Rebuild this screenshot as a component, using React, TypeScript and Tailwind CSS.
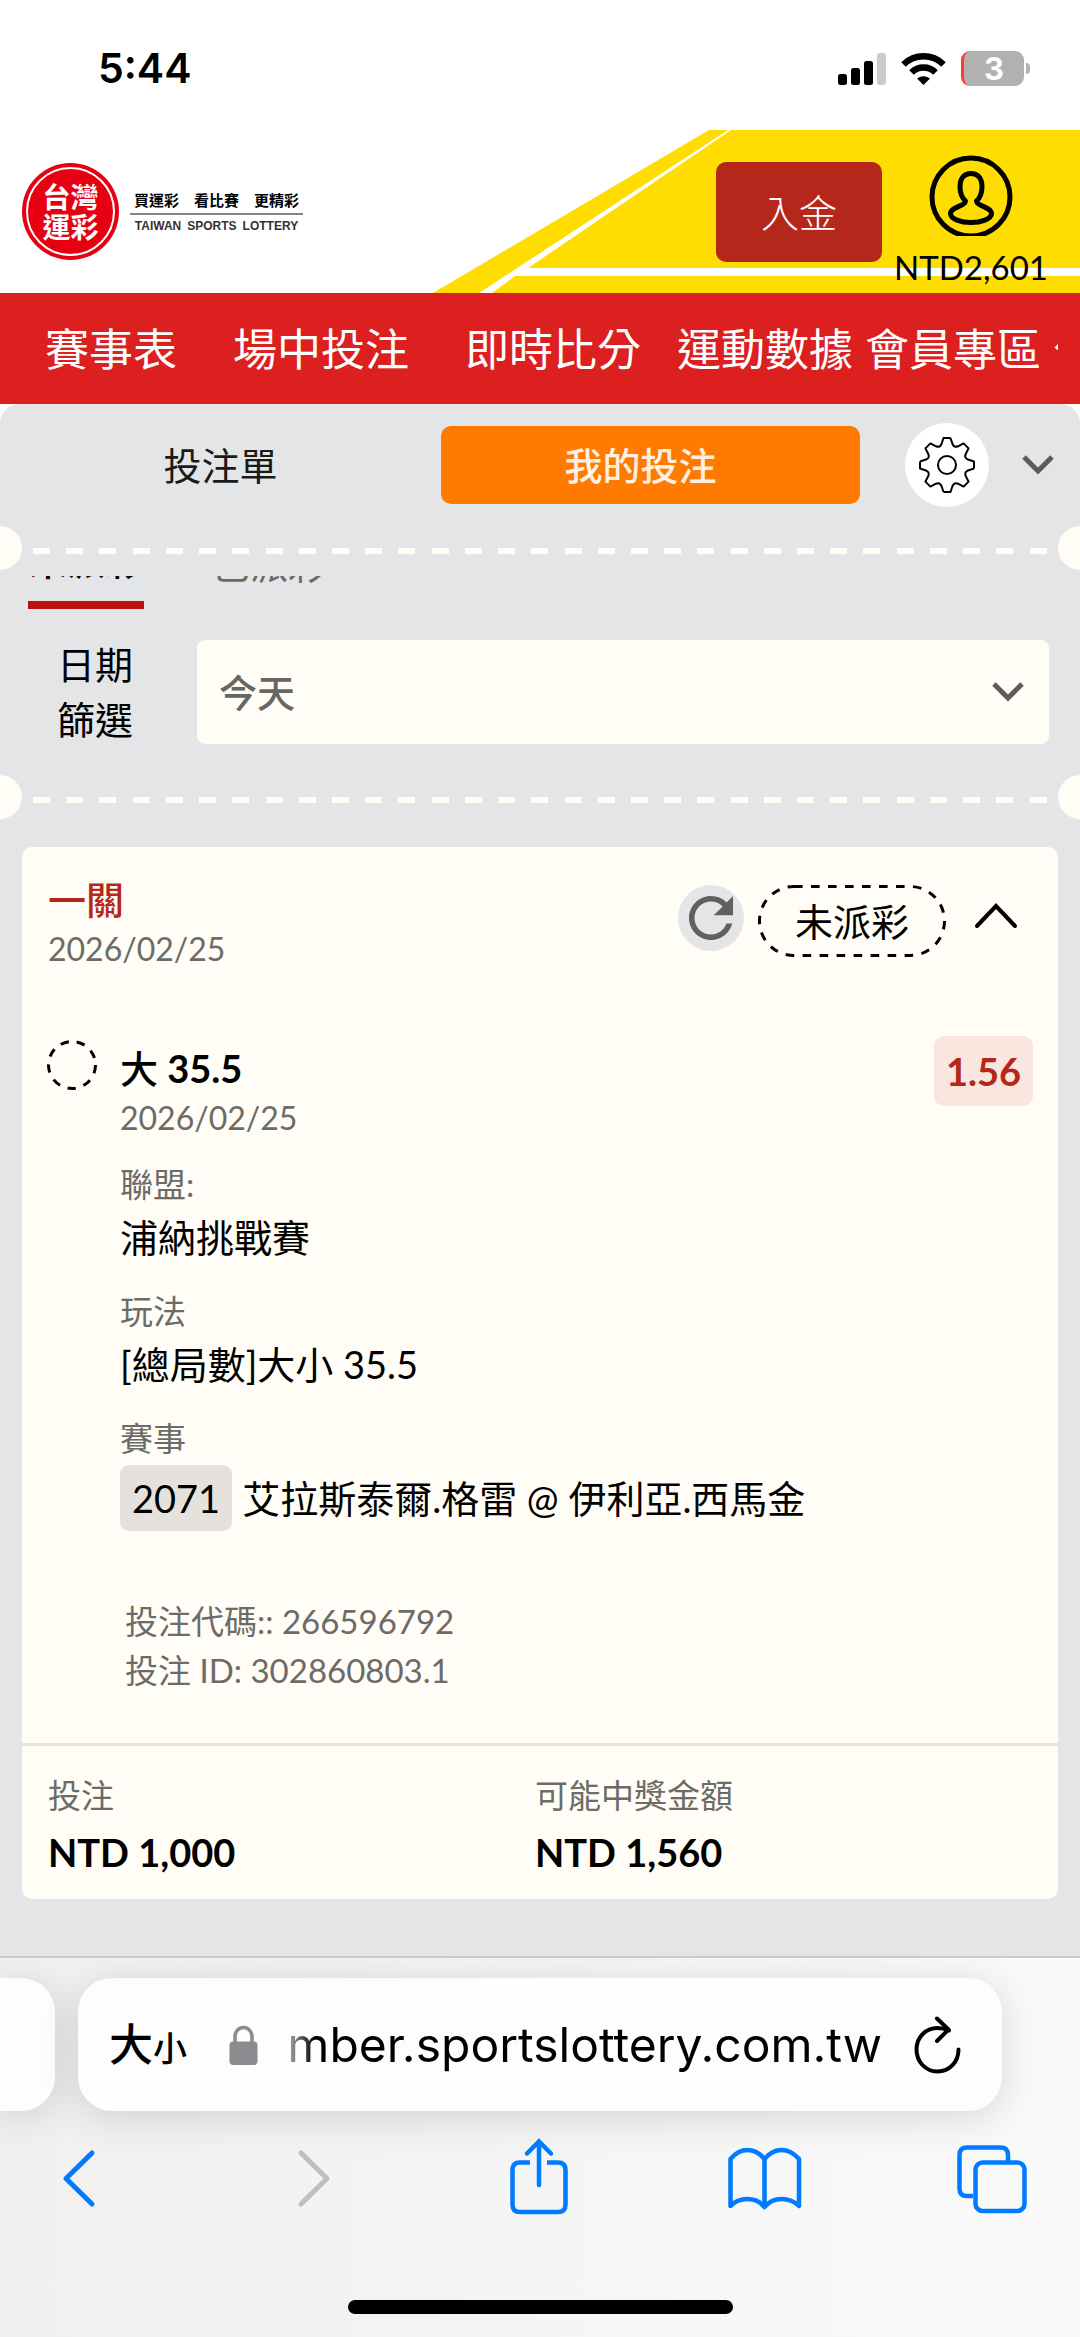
import React, { useState } from 'react';
import { MdRefresh } from 'react-icons/md';

const navItems = [
  { label: '賽事表', className: 'pr-11' },
  { label: '場中投注', className: 'pr-11' },
  { label: '即時比分', className: 'pr-6' },
  { label: '運動數據', className: '' },
  { label: '會員專區', className: '' },
  { label: '公益', className: '' }
];

const StatusBar: React.FC = () => (
  <div className="flex h-[130px] items-start justify-between bg-white pt-[47px] pl-[98px] pr-[50px] font-['Inter',sans-serif]">
    <span className="text-[41px] leading-[43px] font-semibold text-black">5:44</span>
    <div className="flex items-center gap-[15px] pt-1">
      <svg width="48" height="34" viewBox="0 0 48 34">
        <rect x="0" y="22" width="9" height="11" rx="2.5" />
        <rect x="13" y="16" width="9" height="17" rx="2.5" />
        <rect x="26" y="9" width="9" height="24" rx="2.5" />
        <rect x="39" y="1" width="9" height="32" rx="2.5" fill="#cccccc" />
      </svg>
      <svg width="45" height="34" viewBox="0 0 45 34">
        <g fill="none" stroke="#000" strokeWidth="6.5">
          <path d="M2.5 12.5a28.5 28.5 0 0 1 40 0" />
          <path d="M10.5 20.5a17 17 0 0 1 24 0" />
        </g>
        <path d="M16 26.500q6.500-4.500 13 0L22.500 33z" />
      </svg>
      <div className="flex items-center gap-[2px]">
        <div className="flex h-[35px] w-[63px] items-center justify-center overflow-hidden rounded-[9px] border-l-[3px] border-[#ff3b30] bg-[#b1b1b1]">
          <span className="text-[31px] leading-[35px] font-bold text-white">3</span>
        </div>
        <div className="h-[11px] w-[4px] rounded-r-full bg-[#b1b1b1]" />
      </div>
    </div>
  </div>
);

const Logo: React.FC = () => (
  <a href="#home" className="flex items-center gap-[11px]">
    <span className="flex h-[97px] w-[97px] rounded-full bg-[#e60012] p-1">
      <span className="flex flex-1 flex-col items-center justify-center rounded-full border-2 border-white text-[28px] leading-[30px] font-bold text-white">
        <span>台灣</span>
        <span>運彩</span>
      </span>
    </span>
    <span className="flex w-[173px] flex-col items-center">
      <span className="flex gap-[15px] text-[15px] leading-[20px] font-bold text-black">
        <span>買運彩</span>
        <span>看比賽</span>
        <span>更精彩</span>
      </span>
      <span className="mt-[3px] h-[2px] w-full bg-[#85857f]" />
      <span className="flex gap-[6px] pt-1 font-['Liberation_Sans',sans-serif] text-[12px] leading-[14px] font-bold text-[#3a2f2f]">
        <span>TAIWAN</span>
        <span>SPORTS</span>
        <span>LOTTERY</span>
      </span>
    </span>
  </a>
);

const SiteHeader: React.FC = () => (
  <header className="relative flex h-[163px] items-start justify-between bg-white pr-[34px] pl-[22px]">
    <svg className="absolute top-0 right-0" width="648" height="163" viewBox="0 0 648 163" fill="#ffdd00">
      <path d="M277 0h19L47 163H1z" />
      <path d="M299 0h349v138H96z" />
      <path d="M83 146h565v17H60z" />
    </svg>
    <div className="relative pt-[33px]">
      <Logo />
    </div>
    <div className="relative flex items-start gap-[14px]">
      <button type="button" className="mt-8 h-[100px] w-[166px] rounded-[10px] bg-[#b5271a] text-[38px] leading-[38px] font-light text-white">
        入金
      </button>
      <button type="button" className="flex w-[150px] flex-col items-center pt-[25px]">
        <svg width="84" height="81" viewBox="0 0 84 81" fill="none" stroke="#000" strokeWidth="5">
          <circle cx="42" cy="42" r="39" />
          <path d="M42 18.500C34 18.500 31 24.500 31 31.500C31 38 32 42 36.500 46C36.500 51 21.500 52 21.500 58.500C21.500 64 32 67.500 42 67.500C52 67.500 62.500 64 62.500 58.500C62.500 52 47.500 51 47.500 46C52 42 53 38 53 31.500C53 24.500 50 18.500 42 18.500z" />
        </svg>
        <span className="mt-[14px] text-[33px] leading-[34px] text-black">NTD2,601</span>
      </button>
    </div>
  </header>
);

const Chevron: React.FC = () => (
  <svg width="34" height="24" viewBox="0 0 34 24" fill="none" stroke="#5c5c5c" strokeWidth="5">
    <path d="M3 4l14 14L31 4" />
  </svg>
);

// ticket-style tear line with a notch on each side
const TearLine: React.FC = () => (
  <div className="flex h-11 items-start">
    <div className="h-11 w-[22px] rounded-r-full bg-[#fffdf5]" />
    <div className="mx-[11px] mt-[22px] flex flex-1 justify-between">
      {Array.from({ length: 31 }, (_, i) => (
        <span key={i} className="h-[6px] w-[17px] bg-[#fffdf5]" />
      ))}
    </div>
    <div className="h-11 w-[22px] rounded-l-full bg-[#fffdf5]" />
  </div>
);

interface DetailProps {
  label: string;
  children: React.ReactNode;
}

const Detail: React.FC<DetailProps> = ({ label, children }) => (
  <div className="flex flex-col">
    <dt className="text-[33px] leading-[49px] text-[#6b6b68]">{label}</dt>
    <dd className="text-[38px] leading-[56px] text-black">{children}</dd>
  </div>
);

const BetCard: React.FC = () => {
  const [open, setOpen] = useState(true);

  return (
    <article className="mx-[22px] rounded-[10px] bg-[#fffdf5]">
      <div className="flex items-start justify-between pt-7 pr-[26px] pl-[26px]">
        <div>
          <h2 className="text-[38px] leading-[49px] font-medium text-[#b5271a]">一關</h2>
          <p className="text-[32px] leading-[49px] text-[#6b6b68]">2026/02/25</p>
        </div>
        <div className="flex items-start gap-[14px] pt-[10px]">
          <button type="button" aria-label="重新整理" className="flex h-[66px] w-[66px] items-center justify-center rounded-full bg-[#e4e5e7] text-[#5f6062]">
            <MdRefresh size={66} />
          </button>
          <span className="relative flex h-[72px] w-[188px] items-center justify-center text-[38px] leading-[38px] text-black">
            <svg className="absolute inset-0" width="188" height="72" viewBox="0 0 188 72" fill="none">
              <rect x="1.500" y="1.500" width="185" height="69" rx="34.500" stroke="#000" strokeWidth="3" strokeDasharray="8.600 8.400" />
            </svg>
            未派彩
          </span>
          <button type="button" aria-label="收合" className="flex h-[62px] w-[72px] items-center justify-center" onClick={() => setOpen(!open)}>
            <svg width="44" height="26" viewBox="0 0 44 26" fill="none" stroke="#000" strokeWidth="4" strokeLinecap="round">
              <path d="M3 23L22 3l19 20" />
            </svg>
          </button>
        </div>
      </div>

      {open && (
        <div className="flex items-start gap-[23px] pt-[71px] pr-[25px] pb-12 pl-[25px]">
          <svg className="-mt-1 shrink-0" width="50" height="50" viewBox="0 0 50 50" fill="none">
            <circle cx="25" cy="25" r="23.500" stroke="#000" strokeWidth="3" strokeDasharray="8.400 8" />
          </svg>
          <div className="min-w-0 flex-1">
            <div className="flex items-start justify-between">
              <div>
                <h3 className="text-[38px] leading-[49px] font-bold text-black">
                  <span className="font-medium">大</span> 35.5
                </h3>
                <p className="text-[32px] leading-[49px] text-[#6b6b68]">2026/02/25</p>
              </div>
              <span className="-mt-2 flex h-[70px] w-[99px] items-center justify-center rounded-[10px] bg-[#f8e6df] text-[38px] leading-[38px] font-bold text-[#b5271a]">
                1.56
              </span>
            </div>
            <dl className="mt-[18px] flex flex-col gap-[22px]">
              <Detail label="聯盟:">浦納挑戰賽</Detail>
              <Detail label="玩法">[總局數]大小 35.5</Detail>
              <Detail label="賽事">
                <span className="flex items-center gap-[10px] pt-[2px]">
                  <span className="rounded-[9px] bg-[#e5e2dd] px-3 leading-[66px]">2071</span>
                  <span>艾拉斯泰爾.格雷 @ 伊利亞.西馬金</span>
                </span>
              </Detail>
            </dl>
            <div className="mt-[66px] pl-[5px] text-[33px] leading-[49px] text-[#6b6b68]">
              <p>投注代碼:: 266596792</p>
              <p>投注 ID: 302860803.1</p>
            </div>
          </div>
        </div>
      )}

      <dl className="flex border-t-[3px] border-[#e6e3da] px-[26px] pt-[25px] pb-[19px]">
        <div className="flex w-[487px] flex-col gap-1">
          <dt className="text-[33px] leading-[49px] text-[#6b6b68]">投注</dt>
          <dd className="text-[38px] leading-[56px] font-bold text-black">NTD 1,000</dd>
        </div>
        <div className="flex flex-1 flex-col gap-1">
          <dt className="text-[33px] leading-[49px] text-[#6b6b68]">可能中獎金額</dt>
          <dd className="text-[38px] leading-[56px] font-bold text-black">NTD 1,560</dd>
        </div>
      </dl>
    </article>
  );
};

const BrowserBar: React.FC = () => (
  <footer className="flex flex-1 flex-col items-center overflow-hidden border-t-2 border-[#cacaca] bg-linear-to-r from-[#f2efef] via-[#f5f5f5] to-[#fafafa]">
    <div className="flex w-full gap-[23px] pt-5 pr-[78px]">
      <div className="h-[133px] w-[55px] rounded-r-[34px] bg-[#fdfdfd] shadow-[0_6px_40px_rgba(0,0,0,0.14)]" />
      <div className="flex h-[133px] flex-1 items-center rounded-[34px] bg-[#fdfdfd] pr-[40px] pl-[31px] shadow-[0_6px_40px_rgba(0,0,0,0.14)]">
        <button type="button" className="flex items-baseline font-['Noto_Sans_CJK_TC',sans-serif] leading-[50px] font-medium text-black">
          <span className="text-[44px]">大</span>
          <span className="text-[34px]">小</span>
        </button>
        <svg className="ml-[42px]" width="29" height="40" viewBox="0 0 29 40">
          <path d="M6 18V11.500a8.500 9 0 0 1 17 0V18" fill="none" stroke="#8a8a8f" strokeWidth="3.600" />
          <rect x="0.500" y="16.500" width="28" height="23.500" rx="4" fill="#8a8a8f" />
        </svg>
        <input
          type="text"
          aria-label="網址"
          readOnly
          value="mber.sportslottery.com.tw"
          className="ml-[17px] w-0 flex-1 bg-transparent text-right font-['Inter',sans-serif] text-[48px] leading-[64px] text-black outline-none [mask-image:linear-gradient(90deg,transparent,black_40px)]"
        />
        <button type="button" aria-label="重新載入" className="ml-[30px]">
          <svg width="50" height="60" viewBox="0 0 50 60" fill="none" stroke="#000" strokeWidth="4" strokeLinecap="round" strokeLinejoin="round">
            <path d="M37 15.500C32.500 13.500 29 13 25.500 13C13.500 13 4.500 22.500 4.500 34.500S13.500 56.500 25.500 56.500S46.500 47 46.500 34.500" />
            <path d="M25 3.500L36.500 14.500L25 26" />
          </svg>
        </button>
      </div>
    </div>
    <nav className="mt-[26px] flex w-full justify-between pr-[48px] pl-[39px]">
      <button type="button" aria-label="上一頁">
        <svg width="80" height="80" viewBox="0 0 80 80" fill="none" stroke="#007aff" strokeWidth="5" strokeLinecap="round" strokeLinejoin="round">
          <path d="M53 16L27 41.500L53 67" />
        </svg>
      </button>
      <button type="button" aria-label="下一頁" disabled>
        <svg width="80" height="80" viewBox="0 0 80 80" fill="none" stroke="#bfbfbf" strokeWidth="5" strokeLinecap="round" strokeLinejoin="round">
          <path d="M34 16L60 41.500L34 67" />
        </svg>
      </button>
      <button type="button" aria-label="分享">
        <svg width="80" height="80" viewBox="0 0 80 80" fill="none" stroke="#007aff" strokeWidth="4.500">
          <path d="M34 25.500H24Q16.500 25.500 16.500 33V67.500Q16.500 75 24 75H62Q69.500 75 69.500 67.500V33Q69.500 25.500 62 25.500H51" />
          <path d="M43 5V48M31 16.500L43 4.500L55 16.500" strokeLinecap="round" />
        </svg>
      </button>
      <button type="button" aria-label="書籤">
        <svg width="80" height="80" viewBox="0 0 80 80" fill="none" stroke="#007aff" strokeWidth="4.500" strokeLinejoin="round">
          <path d="M40.500 22Q33 13 23.500 13T6.500 22V69Q13 62 23.500 62T40.500 70Q47 62 57.500 62T75 69V22Q67 13 57.500 13T40.500 22V70" />
        </svg>
      </button>
      <button type="button" aria-label="分頁">
        <svg width="80" height="80" viewBox="0 0 80 80" fill="none" stroke="#007aff" strokeWidth="4.500">
          <path d="M21 59H15Q7.500 59 7.500 51.500V18Q7.500 10.500 15 10.500H48.500Q56 10.500 56 18V24" />
          <rect x="23.500" y="25.500" width="49" height="48.500" rx="7" />
        </svg>
      </button>
    </nav>
    <div className="mt-[83px] mb-[22px] h-[14px] w-[385px] rounded-full bg-black" />
  </footer>
);

export default function App() {
  const [range, setRange] = useState('today');

  return (
    <div className="flex min-h-screen flex-col bg-[#fffdf5] font-['Lato','Noto_Sans_CJK_TC',sans-serif]">
      <StatusBar />
      <SiteHeader />
      <nav className="bg-[#dc1f1f] pr-[22px] pl-[45px]">
        <div className="flex h-[111px] items-center gap-3 overflow-hidden text-[44px] leading-[60px] whitespace-nowrap text-white">
          {navItems.map((item) => (
            <a key={item.label} href="#nav" className={`shrink-0 ${item.className}`}>
              {item.label}
            </a>
          ))}
        </div>
      </nav>

      <main className="rounded-t-[20px] bg-[#e4e5e7] pb-[57px]">
        <div className="flex items-center py-[19px] pr-[25px]">
          <div className="grid flex-1 grid-cols-[441fr_419fr] pr-[45px]">
            <button type="button" className="h-[78px] text-[38px] leading-[38px] text-[#1a1a1a]">
              投注單
            </button>
            <button type="button" className="h-[78px] rounded-[10px] bg-[#ff7a00] pr-5 text-[38px] leading-[38px] font-medium text-[#fff0e2]">
              我的投注
            </button>
          </div>
          <button type="button" aria-label="設定" className="flex h-[84px] w-[84px] items-center justify-center rounded-full bg-white">
            <svg width="60" height="60" viewBox="-30 -30 60 60" fill="none" stroke="#000" strokeWidth="2" strokeLinejoin="round">
              {[0, 90, 180, 270].map((angle) => (
                <path
                  key={angle}
                  transform={`rotate(${angle})`}
                  d="M3.500 -27L5.500 -21Q7.100 -17.100 11 -18.700L16.600 -21.600L21.600 -16.600L18.700 -11Q17.100 -7.100 21 -5.500L27 -3.500V3.500"
                />
              ))}
              <circle r="9" />
            </svg>
          </button>
          <button type="button" aria-label="展開" className="ml-[32px]">
            <Chevron />
          </button>
        </div>

        <TearLine />

        <div className="mt-[6px] flex h-[33px] items-end gap-[68px] overflow-hidden pl-7 text-[38px] leading-[38px]">
          <button type="button" className="w-[116px] border-b-8 border-[#bb1010] pb-[22px] font-medium text-black">
            未派彩
          </button>
          <button type="button" className="border-b-8 border-transparent pb-[18px] text-[#6b6b68]">
            已派彩
          </button>
        </div>

        <div className="my-7 flex items-center gap-[62px] pr-[29px] pl-[57px]">
          <label htmlFor="range" className="w-[76px] text-[38px] leading-[55px] text-black">
            日期篩選
          </label>
          <div className="relative flex-1">
            <select
              id="range"
              value={range}
              onChange={(e) => setRange(e.target.value)}
              className="h-[108px] w-full appearance-none rounded-[10px] border-2 border-[#e8e5dd] bg-[#fffdf5] pl-[22px] text-[38px] font-medium text-[#666663]"
            >
              <option value="today">今天</option>
              <option value="yesterday">昨天</option>
            </select>
            <span className="pointer-events-none absolute inset-y-0 right-[26px] flex items-center">
              <Chevron />
            </span>
          </div>
        </div>

        <TearLine />

        <div className="pt-7">
          <BetCard />
        </div>
      </main>

      <BrowserBar />
    </div>
  );
}
